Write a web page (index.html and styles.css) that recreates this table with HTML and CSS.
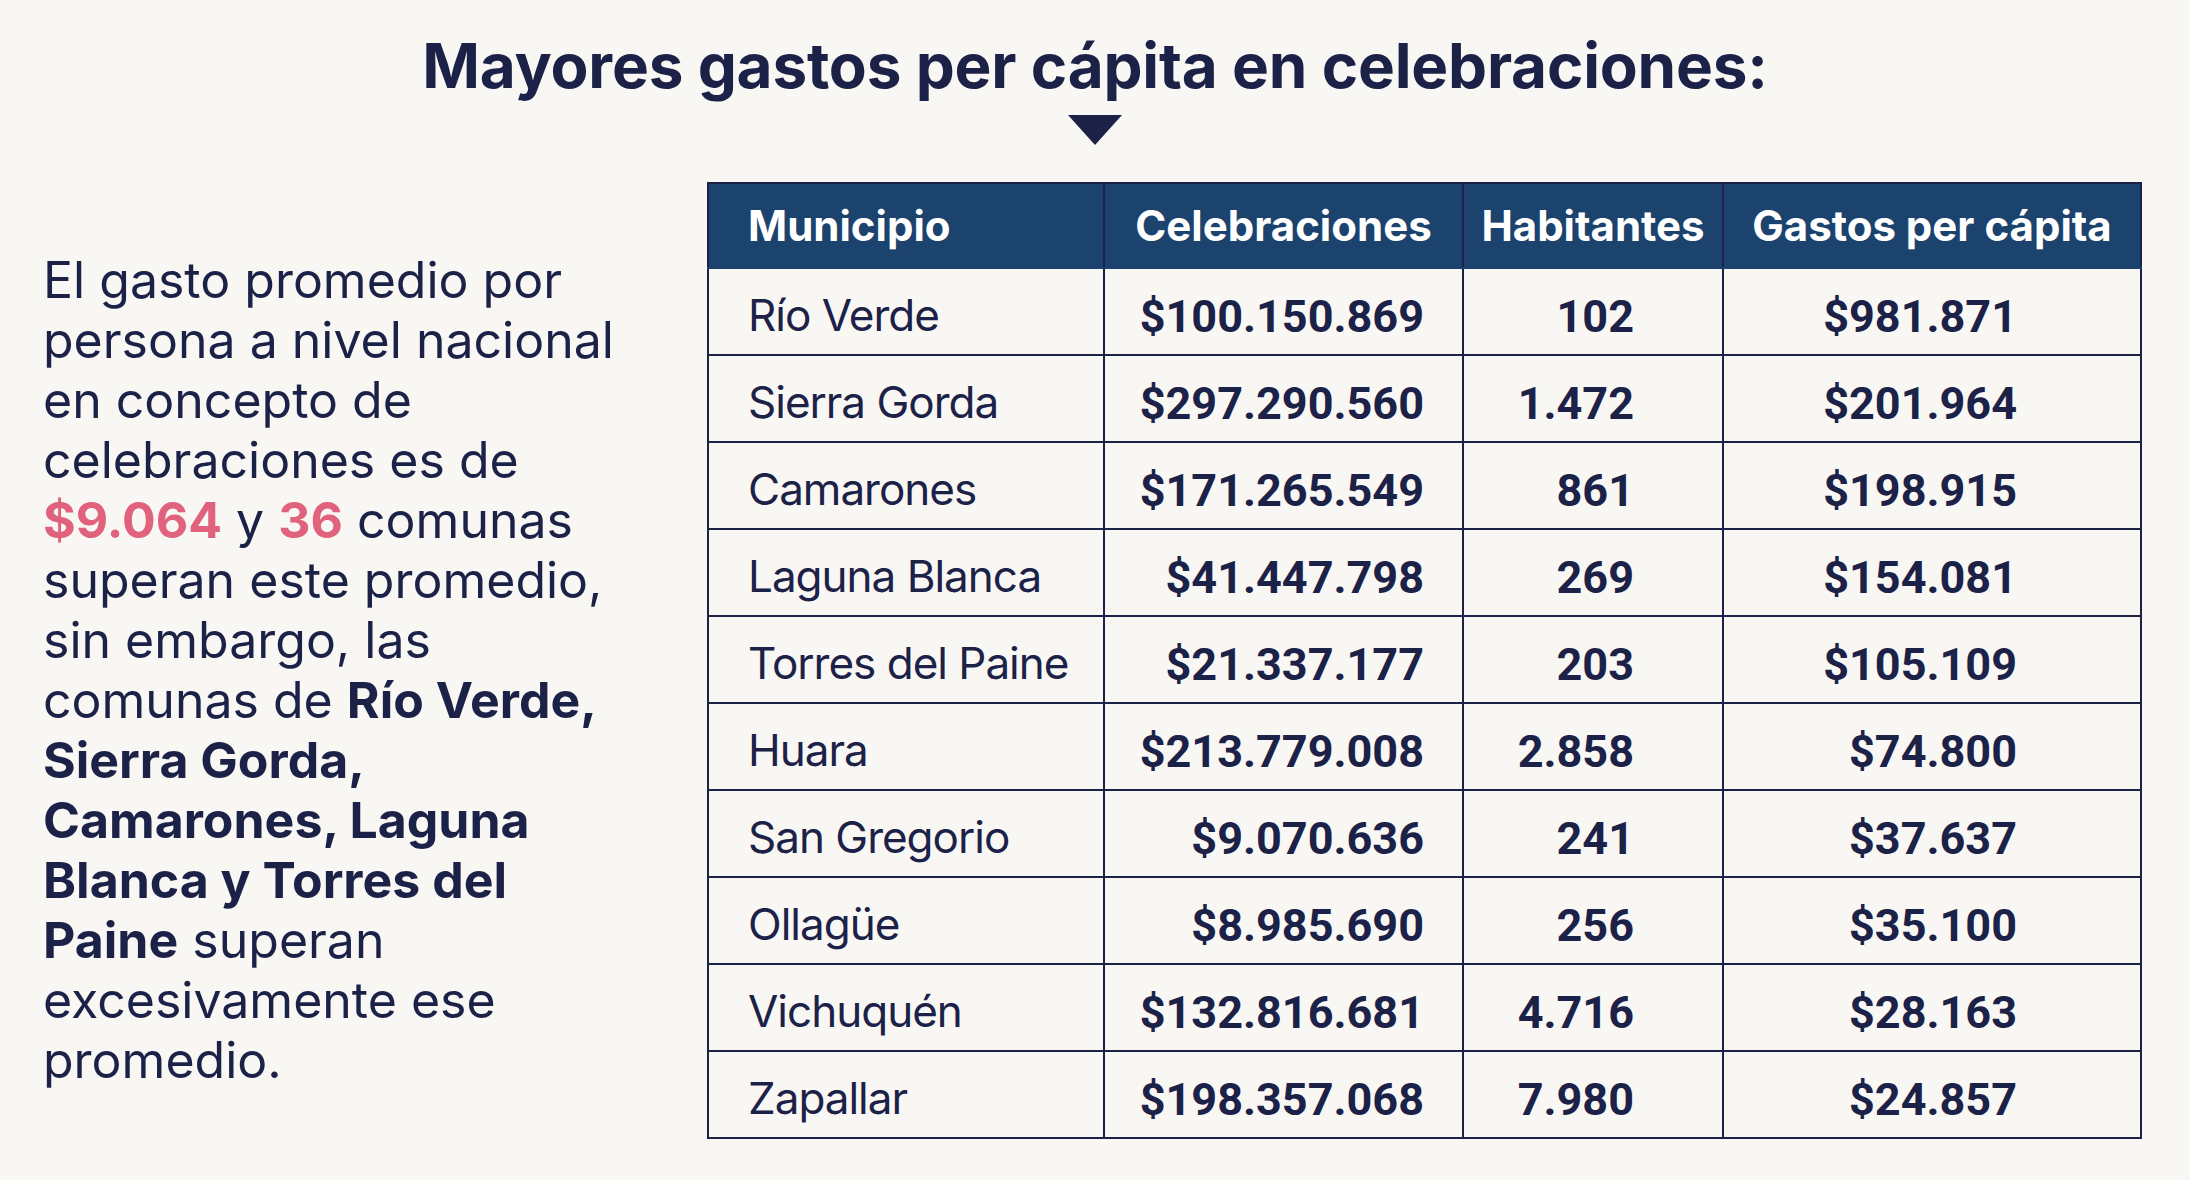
FILE: index.html
```html
<!DOCTYPE html>
<html lang="es">
<head>
<meta charset="utf-8">
<title>Mayores gastos per cápita en celebraciones</title>
<link rel="stylesheet" href="styles.css">
</head>
<body>
<div class="page">
  <h1 class="title">Mayores gastos per cápita en celebraciones:</h1>
  <div class="arrow"></div>
  <div class="content">
    <p class="summary">El gasto promedio por<br>persona a nivel nacional<br>en concepto de<br>celebraciones es de<br><span class="hl">$9.064</span> y <span class="hl">36</span> comunas<br>superan este promedio,<br>sin embargo, las<br>comunas de <b>Río Verde,</b><br><b>Sierra Gorda,</b><br><b>Camarones, Laguna</b><br><b>Blanca y Torres del</b><br><b>Paine</b> superan<br>excesivamente ese<br>promedio.</p>
    <table class="data">
      <colgroup>
        <col class="c1"><col class="c2"><col class="c3"><col class="c4">
      </colgroup>
      <thead>
        <tr><th class="left">Municipio</th><th>Celebraciones</th><th>Habitantes</th><th>Gastos per cápita</th></tr>
      </thead>
      <tbody>
        <tr><td class="name">Río Verde</td><td class="num cel">$100.150.869</td><td class="num hab">102</td><td class="num gas">$981.871</td></tr>
        <tr><td class="name">Sierra Gorda</td><td class="num cel">$297.290.560</td><td class="num hab">1.472</td><td class="num gas">$201.964</td></tr>
        <tr><td class="name">Camarones</td><td class="num cel">$171.265.549</td><td class="num hab">861</td><td class="num gas">$198.915</td></tr>
        <tr><td class="name">Laguna Blanca</td><td class="num cel">$41.447.798</td><td class="num hab">269</td><td class="num gas">$154.081</td></tr>
        <tr><td class="name">Torres del Paine</td><td class="num cel">$21.337.177</td><td class="num hab">203</td><td class="num gas">$105.109</td></tr>
        <tr><td class="name">Huara</td><td class="num cel">$213.779.008</td><td class="num hab">2.858</td><td class="num gas">$74.800</td></tr>
        <tr><td class="name">San Gregorio</td><td class="num cel">$9.070.636</td><td class="num hab">241</td><td class="num gas">$37.637</td></tr>
        <tr><td class="name">Ollagüe</td><td class="num cel">$8.985.690</td><td class="num hab">256</td><td class="num gas">$35.100</td></tr>
        <tr><td class="name">Vichuquén</td><td class="num cel">$132.816.681</td><td class="num hab">4.716</td><td class="num gas">$28.163</td></tr>
        <tr><td class="name">Zapallar</td><td class="num cel">$198.357.068</td><td class="num hab">7.980</td><td class="num gas">$24.857</td></tr>
      </tbody>
    </table>
  </div>
</div>
</body>
</html>
```
FILE: styles.css
```css
html {
  background: #ffffff;
}
body {
  margin: 0;
  font-family: Inter, "Noto Sans", sans-serif;
  color: #1c2148;
}
.page {
  height: 1180px;
  background: #f8f7f3;
  overflow: hidden;
}
.title {
  margin: 26px 0 0;
  font-size: 62px;
  line-height: 80px;
  font-weight: 700;
  text-align: center;
  letter-spacing: -0.2px;
  color: #1c2148;
}
.arrow {
  width: 0;
  height: 0;
  margin: 9px auto 0;
  border-left: 27px solid transparent;
  border-right: 27px solid transparent;
  border-top: 30px solid #1c2148;
}
.content {
  display: flex;
  align-items: flex-start;
  margin-top: 37px;
  padding-left: 43px;
  gap: 64px;
}
.summary {
  flex: 0 0 600px;
  margin: 68px 0 0;
  font-size: 50px;
  line-height: 60px;
  font-weight: 400;
  white-space: nowrap;
}
.summary b {
  font-weight: 700;
}
.hl {
  color: #e0627c;
  font-weight: 700;
}
.data {
  border-collapse: collapse;
  table-layout: fixed;
  width: 1433px;
  border: 2px solid #1c2148;
}
.c1 { width: 396px; }
.c2 { width: 359px; }
.c3 { width: 260px; }
.c4 { width: 418px; }
.data th {
  height: 83px;
  padding: 0;
  background: #1b436e;
  color: #ffffff;
  font-size: 42px;
  font-weight: 700;
  text-align: center;
  border: 2px solid #1c2148;
  border-bottom: 2px solid #1b436e;
}
.data th.left {
  text-align: left;
  padding-left: 39px;
}
.data td {
  height: 85px;
  padding: 0;
  border: 2px solid #1c2148;
}
.data td.name {
  padding-left: 39px;
  padding-top: 6px;
  height: 79px;
  font-size: 44px;
  font-weight: 400;
  letter-spacing: -1px;
}
.data td.num {
  font-family: Roboto, "Liberation Sans", sans-serif;
  font-weight: 700;
  font-size: 45px;
  text-align: right;
  padding-top: 10px;
  height: 75px;
}
.data td.cel { padding-right: 38px; }
.data td.hab { padding-right: 88px; }
.data td.gas { padding-right: 123px; }
```
